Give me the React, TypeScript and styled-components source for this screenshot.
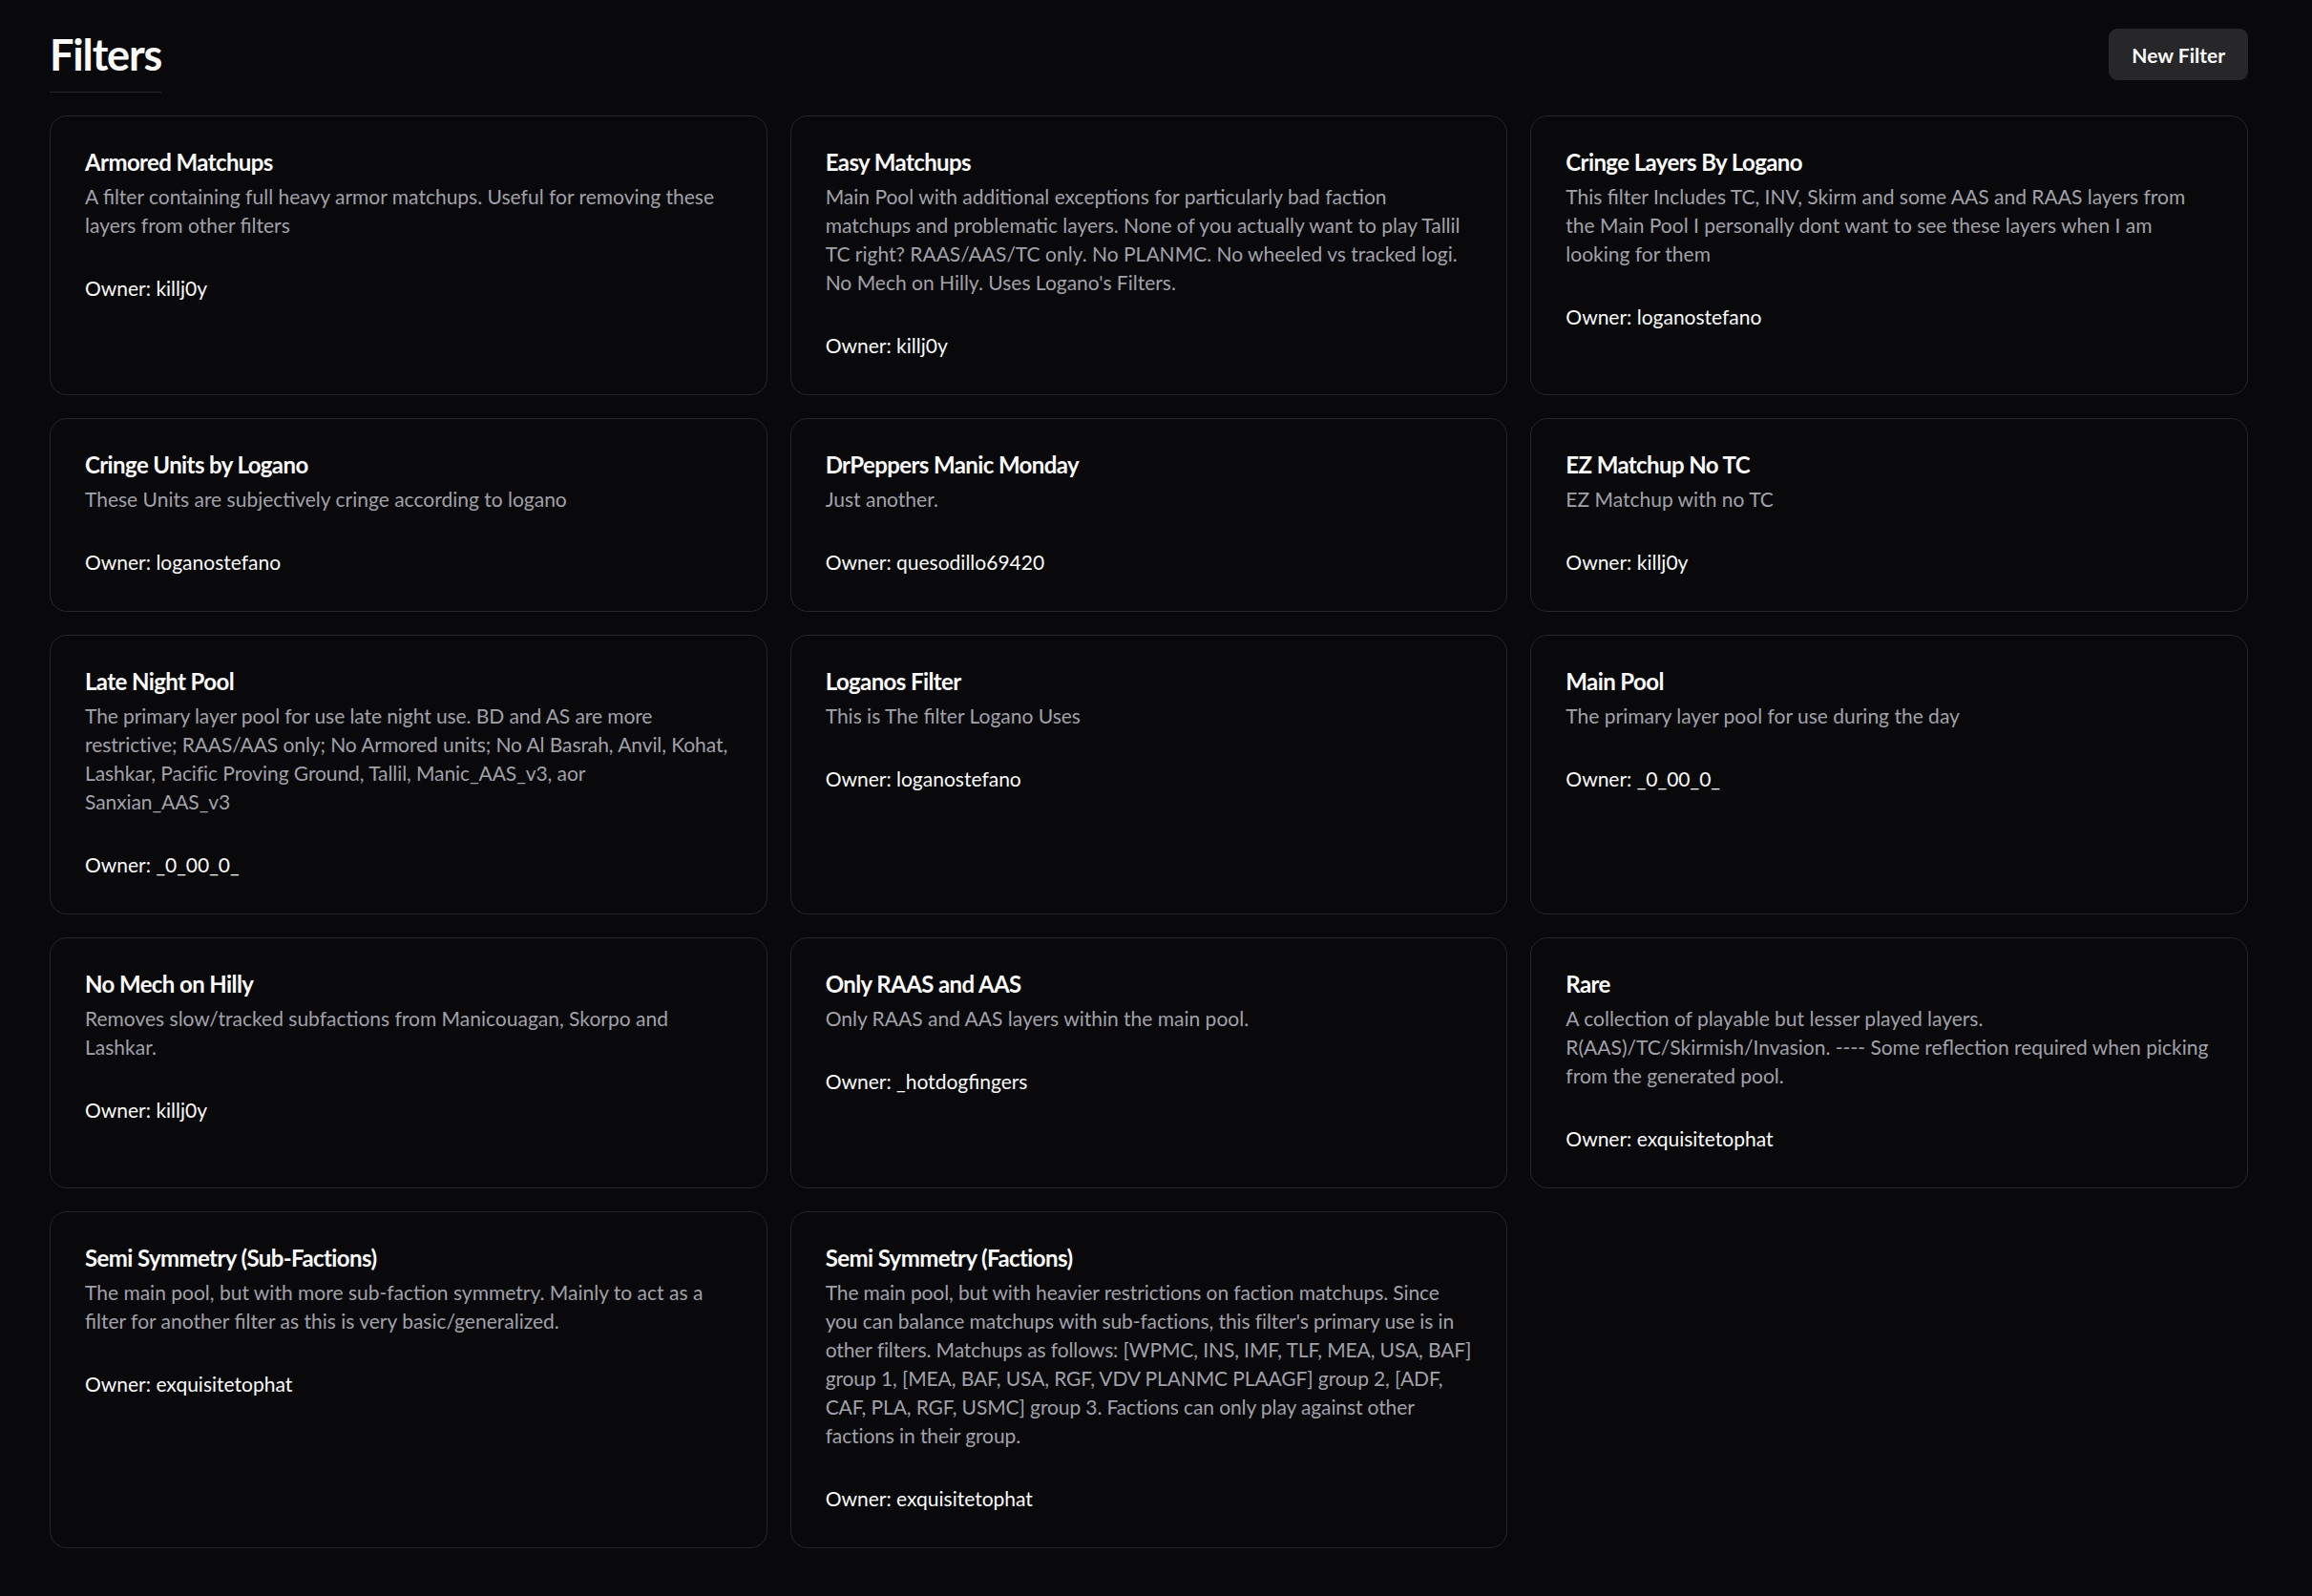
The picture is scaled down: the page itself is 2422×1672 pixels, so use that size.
import styled, { createGlobalStyle } from "styled-components"

type Filter = {
  name: string
  description: string
  owner: string
  tracking?: number
}

const filters: Filter[] = [
  {
    name: "Armored Matchups",
    description:
      "A filter containing full heavy armor matchups. Useful for removing these layers from other filters",
    owner: "killj0y",
  },
  {
    name: "Easy Matchups",
    description:
      "Main Pool with additional exceptions for particularly bad faction matchups and problematic layers. None of you actually want to play Tallil TC right? RAAS/AAS/TC only. No PLANMC. No wheeled vs tracked logi. No Mech on Hilly. Uses Logano's Filters.",
    owner: "killj0y",
  },
  {
    name: "Cringe Layers By Logano",
    description:
      "This filter Includes TC, INV, Skirm and some AAS and RAAS layers from the Main Pool I personally dont want to see these layers when I am looking for them",
    owner: "loganostefano",
  },
  {
    name: "Cringe Units by Logano",
    description: "These Units are subjectively cringe according to logano",
    owner: "loganostefano",
  },
  {
    name: "DrPeppers Manic Monday",
    description: "Just another.",
    owner: "quesodillo69420",
  },
  {
    name: "EZ Matchup No TC",
    description: "EZ Matchup with no TC",
    owner: "killj0y",
  },
  {
    name: "Late Night Pool",
    description:
      "The primary layer pool for use late night use. BD and AS are more restrictive; RAAS/AAS only; No Armored units; No Al Basrah, Anvil, Kohat, Lashkar, Pacific Proving Ground, Tallil, Manic_AAS_v3, aor Sanxian_AAS_v3",
    owner: "_0_00_0_",
    tracking: -0.08,
  },
  {
    name: "Loganos Filter",
    description: "This is The filter Logano Uses",
    owner: "loganostefano",
  },
  {
    name: "Main Pool",
    description: "The primary layer pool for use during the day",
    owner: "_0_00_0_",
  },
  {
    name: "No Mech on Hilly",
    description:
      "Removes slow/tracked subfactions from Manicouagan, Skorpo and Lashkar.",
    owner: "killj0y",
  },
  {
    name: "Only RAAS and AAS",
    description: "Only RAAS and AAS layers within the main pool.",
    owner: "_hotdogfingers",
  },
  {
    name: "Rare",
    description:
      "A collection of playable but lesser played layers. R(AAS)/TC/Skirmish/Invasion. ---- Some reflection required when picking from the generated pool.",
    owner: "exquisitetophat",
  },
  {
    name: "Semi Symmetry (Sub-Factions)",
    description:
      "The main pool, but with more sub-faction symmetry. Mainly to act as a filter for another filter as this is very basic/generalized.",
    owner: "exquisitetophat",
  },
  {
    name: "Semi Symmetry (Factions)",
    description:
      "The main pool, but with heavier restrictions on faction matchups. Since you can balance matchups with sub-factions, this filter's primary use is in other filters. Matchups as follows: [WPMC, INS, IMF, TLF, MEA, USA, BAF] group 1, [MEA, BAF, USA, RGF, VDV PLANMC PLAAGF] group 2, [ADF, CAF, PLA, RGF, USMC] group 3. Factions can only play against other factions in their group.",
    owner: "exquisitetophat",
    tracking: -0.11,
  },
]

const GlobalStyle = createGlobalStyle`
  * {
    box-sizing: border-box;
  }

  html,
  body {
    margin: 0;
    background: #09090b;
    color: #fafafa;
    font-family: Lato, "Noto Sans", sans-serif;
  }
`

const Page = styled.main`
  min-height: 100vh;
  padding: 30px 67px 52px 52px;
`

const Header = styled.div`
  display: flex;
  justify-content: space-between;
  align-items: flex-start;
  margin-bottom: 24px;
`

const Heading = styled.h2`
  margin: 0;
  padding-bottom: 12px;
  border-bottom: 1px solid #27272a;
  font-size: 45px;
  line-height: 54px;
  font-weight: 700;
  letter-spacing: -0.025em;
`

const NewButton = styled.button`
  height: 54px;
  padding: 0 24px;
  border: none;
  border-radius: 9px;
  background: #27272a;
  color: #fafafa;
  font-family: inherit;
  font-size: 21px;
  font-weight: 700;
  cursor: pointer;

  &:hover {
    background: #3f3f46;
  }
`

const Grid = styled.div`
  display: grid;
  grid-template-columns: repeat(3, 1fr);
  gap: 24px;
`

const Card = styled.div`
  display: flex;
  flex-direction: column;
  border: 1px solid #27272a;
  border-radius: 18px;
  background: #09090b;
`

const CardHeader = styled.div`
  display: flex;
  flex-direction: column;
  gap: 9px;
  padding: 36px;
`

const CardTitle = styled.h3`
  margin: 0;
  font-size: 24px;
  line-height: 24px;
  font-weight: 700;
  letter-spacing: -0.025em;
`

const CardDescription = styled.p<{ $tracking: number }>`
  margin: 0;
  font-size: 21px;
  line-height: 30px;
  letter-spacing: ${({ $tracking }) => $tracking}px;
  color: #a1a1aa;
`

const CardContent = styled.div`
  padding: 0 36px 36px;
`

const Owner = styled.p`
  margin: 0;
  font-size: 21px;
  line-height: 30px;
`

function FilterCard({ filter }: { filter: Filter }) {
  return (
    <Card>
      <CardHeader>
        <CardTitle>{filter.name}</CardTitle>
        <CardDescription $tracking={filter.tracking ?? 0}>
          {filter.description}
        </CardDescription>
      </CardHeader>
      <CardContent>
        <Owner>Owner: {filter.owner}</Owner>
      </CardContent>
    </Card>
  )
}

export default function App() {
  return (
    <Page>
      <GlobalStyle />
      <Header>
        <Heading>Filters</Heading>
        <NewButton>New Filter</NewButton>
      </Header>
      <Grid>
        {filters.map((filter) => (
          <FilterCard key={filter.name} filter={filter} />
        ))}
      </Grid>
    </Page>
  )
}
